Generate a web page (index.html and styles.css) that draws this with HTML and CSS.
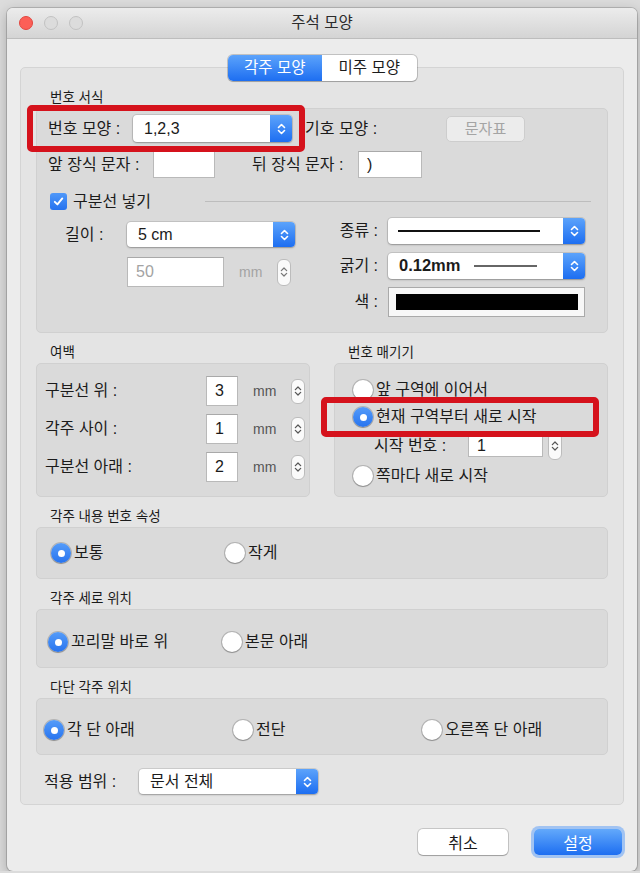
FILE: index.html
```html
<!DOCTYPE html>
<html lang="ko">
<head>
    <meta charset="UTF-8">
    <meta name="viewport" content="width=device-width, initial-scale=1.0">
    <title>주석 모양</title>
    <link rel="stylesheet" href="styles.css">
</head>
<body>
    <div class="window">
        <div class="titlebar">
            <div class="lights">
                <span class="light red"></span>
                <span class="light"></span>
                <span class="light"></span>
            </div>
            <div class="title">주석 모양</div>
            <div></div>
        </div>

        <div class="tabs">
            <span class="tab selected">각주 모양</span>
            <span class="tab">미주 모양</span>
        </div>

        <div class="outer">
            <p class="group-label">번호 서식</p>
            <div class="group format">
                <div class="mark mark-shape"></div>

                <div class="row row-shape">
                    <span class="label w-shape">번호 모양 :</span>
                    <div class="popup popup-shape">
                        <span class="popup-text">1,2,3</span>
                        <span class="popup-arrows"><svg width="9" height="14" viewBox="0 0 9 14"><path d="M1.5 5.5L4.5 2.5L7.5 5.5M1.5 8.5L4.5 11.5L7.5 8.5" fill="none" stroke="#fff" stroke-width="1.6" stroke-linecap="round" stroke-linejoin="round"/></svg></span>
                    </div>
                    <span class="label symbol-label">기호 모양 :</span>
                    <span class="plain-btn">문자표</span>
                </div>

                <div class="row row-deco">
                    <span class="label w-front">앞 장식 문자 :</span>
                    <span class="field field-front"></span>
                    <span class="label w-back">뒤 장식 문자 :</span>
                    <span class="field field-back">)</span>
                </div>

                <div class="row row-check">
                    <span class="checkbox"><svg width="11" height="11" viewBox="0 0 11 11"><path d="M1.8 5.8L4.4 8.4L9.3 2.4" fill="none" stroke="#fff" stroke-width="1.9" stroke-linecap="round" stroke-linejoin="round"/></svg></span>
                    <span class="check-text">구분선 넣기</span>
                    <span class="rule"></span>
                </div>

                <div class="lower">
                    <div class="lower-left">
                        <div class="row row-len">
                            <span class="label w-len">길이 :</span>
                            <div class="popup popup-len">
                                <span class="popup-text">5 cm</span>
                                <span class="popup-arrows"><svg width="9" height="14" viewBox="0 0 9 14"><path d="M1.5 5.5L4.5 2.5L7.5 5.5M1.5 8.5L4.5 11.5L7.5 8.5" fill="none" stroke="#fff" stroke-width="1.6" stroke-linecap="round" stroke-linejoin="round"/></svg></span>
                            </div>
                        </div>
                        <div class="row row-mm">
                            <span class="field field-len disabled">50</span>
                            <span class="unit disabled">mm</span>
                            <span class="stepper stepper-tall"><svg width="8" height="14" viewBox="0 0 9 14"><path d="M1.5 5.5L4.5 2.5L7.5 5.5M1.5 8.5L4.5 11.5L7.5 8.5" fill="none" stroke="#777" stroke-width="1.4" stroke-linecap="round" stroke-linejoin="round"/></svg></span>
                        </div>
                    </div>

                    <div class="lower-right">
                        <div class="row row-line">
                            <span class="label w-line">종류 :</span>
                            <div class="popup popup-line">
                                <span class="popup-text"><span class="sample-line"></span></span>
                                <span class="popup-arrows"><svg width="9" height="14" viewBox="0 0 9 14"><path d="M1.5 5.5L4.5 2.5L7.5 5.5M1.5 8.5L4.5 11.5L7.5 8.5" fill="none" stroke="#fff" stroke-width="1.6" stroke-linecap="round" stroke-linejoin="round"/></svg></span>
                            </div>
                        </div>
                        <div class="row row-line row-weight">
                            <span class="label w-line">굵기 :</span>
                            <div class="popup popup-line">
                                <span class="popup-text"><b class="weight">0.12mm</b><span class="thin-line"></span></span>
                                <span class="popup-arrows"><svg width="9" height="14" viewBox="0 0 9 14"><path d="M1.5 5.5L4.5 2.5L7.5 5.5M1.5 8.5L4.5 11.5L7.5 8.5" fill="none" stroke="#fff" stroke-width="1.6" stroke-linecap="round" stroke-linejoin="round"/></svg></span>
                            </div>
                        </div>
                        <div class="row row-color">
                            <span class="label w-line">색 :</span>
                            <span class="color-well"><span class="swatch"></span></span>
                        </div>
                    </div>
                </div>
            </div>

            <div class="two-col">
                <div class="col">
                    <p class="group-label">여백</p>
                    <div class="group margins">
                        <div class="row row-num">
                            <span class="label w-num">구분선 위 :</span>
                            <span class="field field-num">3</span>
                            <span class="unit">mm</span>
                            <span class="stepper"><svg width="8" height="14" viewBox="0 0 9 14"><path d="M1.5 5.5L4.5 2.5L7.5 5.5M1.5 8.5L4.5 11.5L7.5 8.5" fill="none" stroke="#555" stroke-width="1.4" stroke-linecap="round" stroke-linejoin="round"/></svg></span>
                        </div>
                        <div class="row row-num">
                            <span class="label w-num">각주 사이 :</span>
                            <span class="field field-num">1</span>
                            <span class="unit">mm</span>
                            <span class="stepper"><svg width="8" height="14" viewBox="0 0 9 14"><path d="M1.5 5.5L4.5 2.5L7.5 5.5M1.5 8.5L4.5 11.5L7.5 8.5" fill="none" stroke="#555" stroke-width="1.4" stroke-linecap="round" stroke-linejoin="round"/></svg></span>
                        </div>
                        <div class="row row-num">
                            <span class="label w-num">구분선 아래 :</span>
                            <span class="field field-num">2</span>
                            <span class="unit">mm</span>
                            <span class="stepper"><svg width="8" height="14" viewBox="0 0 9 14"><path d="M1.5 5.5L4.5 2.5L7.5 5.5M1.5 8.5L4.5 11.5L7.5 8.5" fill="none" stroke="#555" stroke-width="1.4" stroke-linecap="round" stroke-linejoin="round"/></svg></span>
                        </div>
                    </div>
                </div>

                <div class="col">
                    <p class="group-label">번호 매기기</p>
                    <div class="group numbering">
                        <div class="mark mark-restart"></div>
                        <div class="row radio-row"><span class="radio"></span>앞 구역에 이어서</div>
                        <div class="row radio-row row-restart"><span class="radio on"></span>현재 구역부터 새로 시작</div>
                        <div class="row row-start">
                            <span class="label w-start">시작 번호 :</span>
                            <span class="field field-start">1</span>
                            <span class="stepper stepper-start"><svg width="8" height="14" viewBox="0 0 9 14"><path d="M1.5 5.5L4.5 2.5L7.5 5.5M1.5 8.5L4.5 11.5L7.5 8.5" fill="none" stroke="#555" stroke-width="1.4" stroke-linecap="round" stroke-linejoin="round"/></svg></span>
                        </div>
                        <div class="row radio-row row-page"><span class="radio"></span>쪽마다 새로 시작</div>
                    </div>
                </div>
            </div>

            <p class="group-label">각주 내용 번호 속성</p>
            <div class="group options opt-size">
                <div class="row radio-row"><span class="radio on"></span>보통</div>
                <div class="row radio-row"><span class="radio"></span>작게</div>
            </div>

            <p class="group-label">각주 세로 위치</p>
            <div class="group options opt-vert">
                <div class="row radio-row"><span class="radio on"></span>꼬리말 바로 위</div>
                <div class="row radio-row"><span class="radio"></span>본문 아래</div>
            </div>

            <p class="group-label">다단 각주 위치</p>
            <div class="group options opt-multi">
                <div class="row radio-row"><span class="radio on"></span>각 단 아래</div>
                <div class="row radio-row"><span class="radio"></span>전단</div>
                <div class="row radio-row"><span class="radio"></span>오른쪽 단 아래</div>
            </div>

            <div class="row row-scope">
                <span class="label w-scope">적용 범위 :</span>
                <div class="popup popup-scope">
                    <span class="popup-text">문서 전체</span>
                    <span class="popup-arrows"><svg width="9" height="14" viewBox="0 0 9 14"><path d="M1.5 5.5L4.5 2.5L7.5 5.5M1.5 8.5L4.5 11.5L7.5 8.5" fill="none" stroke="#fff" stroke-width="1.6" stroke-linecap="round" stroke-linejoin="round"/></svg></span>
                </div>
            </div>
        </div>

        <div class="buttons">
            <button class="btn btn-cancel">취소</button>
            <button class="btn btn-ok">설정</button>
        </div>
    </div>
</body>
</html>
```

FILE: styles.css
```css
* {
    box-sizing: border-box;
}

body {
    margin: 0;
    background: #dcdcdc;
    font-family: "Liberation Sans", "Noto Sans CJK KR", sans-serif;
    font-size: 16px;
    line-height: 1.2;
    color: #1b1b1b;
}

.window {
    margin: 8px 0 0 7px;
    width: 630px;
    height: 863px;
    background: #ececec;
    border-radius: 6px;
    box-shadow: 0 0 0 1px rgba(0, 0, 0, 0.16), 0 4px 14px rgba(0, 0, 0, 0.25);
    overflow: hidden;
}

.titlebar {
    height: 31px;
    display: grid;
    grid-template-columns: 1fr auto 1fr;
    align-items: center;
    background: linear-gradient(#ececec, #d4d4d4);
    border-bottom: 1px solid #bdbdbd;
}

.lights {
    display: flex;
    gap: 11px;
    padding-left: 12px;
}

.light {
    width: 14px;
    height: 14px;
    border-radius: 50%;
    background: #dcdcdc;
    border: 1px solid #c2c2c2;
}

.light.red {
    background: #fc5f57;
    border-color: #e2463f;
}

.title {
    font-size: 15.5px;
    color: #2b2b2b;
}

/* segmented tabs */
.tabs {
    position: relative;
    z-index: 1;
    display: flex;
    width: 189px;
    height: 26px;
    margin: 16px auto -14px;
    background: #fff;
    border-radius: 5px;
    box-shadow: 0 0 0 1px rgba(0, 0, 0, 0.18), 0 1px 1px rgba(0, 0, 0, 0.15);
    overflow: hidden;
}

.tab {
    flex: 1;
    display: flex;
    align-items: center;
    justify-content: center;
    font-size: 15.5px;
}

.tab.selected {
    background: linear-gradient(#5ca3fb, #1d6ef1);
    color: #fff;
}

.outer {
    margin: 0 13px;
    height: 738px;
    padding: 10px 15px 0;
    background: #e4e4e4;
    border: 1px solid #d4d4d4;
    border-radius: 5px;
}

.group-label {
    margin: 12px 0 2px 14px;
    font-size: 13.5px;
    line-height: 16px;
}

.group {
    position: relative;
    background: #dadada;
    border: 1px solid #d0d0d0;
    border-radius: 5px;
}

.row {
    display: flex;
    align-items: center;
}

.label {
    flex-shrink: 0;
}

/* red annotation boxes */
.mark {
    position: absolute;
    z-index: 2;
    border: 6px solid #d5121c;
    border-radius: 5px;
}

.mark-shape {
    left: -10px;
    top: -4px;
    width: 278px;
    height: 47px;
}

.mark-restart {
    left: -14px;
    top: 33px;
    width: 278px;
    height: 40px;
}

/* popups */
.popup {
    display: flex;
    height: 100%;
    background: #fff;
    border-radius: 4px;
    box-shadow: 0 0 0 1px rgba(0, 0, 0, 0.1), 0 1px 2px rgba(0, 0, 0, 0.25);
}

.popup-text {
    flex: 1;
    display: flex;
    align-items: center;
    padding-left: 11px;
}

.popup-arrows {
    width: 22px;
    display: flex;
    align-items: center;
    justify-content: center;
    background: linear-gradient(#5ca3fb, #1d6ef1);
    border-radius: 0 4px 4px 0;
}

.field {
    display: flex;
    align-items: center;
    height: 100%;
    padding-left: 8px;
    background: #fff;
    border: 1px solid #b9b9b9;
    border-top-color: #a9a9a9;
}

.field.disabled,
.unit.disabled {
    color: #a3a3a3;
}

.unit {
    margin-left: 15px;
    font-size: 14px;
    color: #555;
}

.stepper {
    display: flex;
    align-items: center;
    justify-content: center;
    width: 14px;
    height: 25px;
    margin-left: 15px;
    background: #fafafa;
    border: 1px solid #bcbcbc;
    border-radius: 6px;
}

/* 번호 서식 */
.format {
    height: 225px;
    padding: 6px 0 0 11px;
}

.row-shape {
    height: 27px;
}

.w-shape {
    width: 85px;
}

.popup-shape {
    width: 159px;
}

.symbol-label {
    width: 141px;
    margin-left: 13px;
}

.plain-btn {
    display: flex;
    align-items: center;
    justify-content: center;
    width: 79px;
    height: 26px;
    background: #ececec;
    border: 1px solid #cdcdcd;
    border-radius: 5px;
    font-size: 15px;
    color: #a4a4a4;
}

.row-deco {
    height: 27px;
    margin-top: 9px;
}

.w-front {
    width: 105px;
}

.field-front {
    width: 62px;
}

.w-back {
    width: 106px;
    margin-left: 37px;
}

.field-back {
    width: 64px;
}

.row-check {
    height: 17px;
    margin-top: 15px;
    padding-left: 2px;
}

.checkbox {
    display: flex;
    align-items: center;
    justify-content: center;
    width: 17px;
    height: 17px;
    background: linear-gradient(#4f98f9, #2672ef);
    border-radius: 3px;
}

.check-text {
    margin-left: 6px;
}

.rule {
    flex: 1;
    height: 1px;
    margin: 0 16px 0 54px;
    background: #bdbdbd;
}

.lower {
    display: flex;
    margin-top: 8px;
}

.lower-left {
    padding: 4px 0 0 17px;
}

.row-len {
    height: 25px;
}

.w-len {
    width: 62px;
}

.popup-len {
    width: 168px;
}

.row-mm {
    height: 30px;
    margin: 10px 0 0 62px;
}

.field-len {
    width: 97px;
}

.stepper-tall {
    height: 27px;
}

.lower-right {
    margin: 0 22px 0 auto;
}

.row-line {
    height: 26px;
}

.row-weight {
    margin-top: 9px;
}

.w-line {
    width: 58px;
    padding-right: 10px;
    text-align: right;
}

.popup-line {
    width: 197px;
}

.sample-line {
    width: 142px;
    height: 2px;
    margin-left: -1px;
    background: #111;
}

.weight {
    font-size: 16.5px;
}

.thin-line {
    width: 63px;
    height: 1.5px;
    margin-left: 14px;
    background: #666;
}

.row-color {
    height: 30px;
    margin-top: 8px;
}

.color-well {
    width: 197px;
    height: 30px;
    padding: 6px 6px 6px 7px;
    background: #f7f7f7;
    border: 1px solid #a9a9a9;
}

.swatch {
    display: block;
    height: 100%;
    background: #000;
}

/* 여백 / 번호 매기기 */
.two-col {
    display: flex;
    gap: 24px;
}

.col {
    flex: 1;
}

.margins {
    height: 134px;
    padding: 4px 0 0 8px;
}

.row-num {
    height: 30px;
    margin-top: 8px;
}

.w-num {
    width: 161px;
}

.field-num {
    width: 32px;
}

.numbering {
    height: 134px;
    padding: 16px 0 0 18px;
}

.radio-row {
    height: 20px;
}

.radio {
    flex-shrink: 0;
    width: 20px;
    height: 20px;
    margin-right: 3px;
    background: #fff;
    border-radius: 50%;
    box-shadow: 0 0 0 1px rgba(0, 0, 0, 0.18), 0 1px 1px rgba(0, 0, 0, 0.2);
}

.radio.on {
    display: flex;
    align-items: center;
    justify-content: center;
    background: linear-gradient(#559cf9, #2874ef);
}

.radio.on::after {
    content: "";
    width: 7px;
    height: 7px;
    background: #fff;
    border-radius: 50%;
}

.row-restart {
    margin-top: 7px;
}

.row-start {
    height: 28px;
    margin-top: 5px;
}

.w-start {
    width: 94px;
    margin-left: 21px;
}

.field-start {
    width: 75px;
    height: 22px;
}

.stepper-start {
    height: 28px;
    margin-left: 5px;
}

.row-page {
    margin-top: 6px;
}

/* radio groups */
.options {
    display: grid;
    align-items: center;
}

.opt-size {
    height: 52px;
    padding-left: 14px;
    grid-template-columns: 174px 1fr;
}

.opt-vert {
    height: 59px;
    padding: 7px 0 0 11px;
    grid-template-columns: 174px 1fr;
}

.opt-multi {
    height: 57px;
    padding: 7px 0 0 7px;
    grid-template-columns: 189px 189px 1fr;
}

.row-scope {
    height: 25px;
    margin-top: 14px;
}

.w-scope {
    width: 103px;
    padding-left: 8px;
}

.popup-scope {
    width: 179px;
}

/* bottom buttons */
.buttons {
    display: flex;
    justify-content: flex-end;
    gap: 26px;
    margin: 24px 15px 0 0;
}

.btn {
    height: 26px;
    border: none;
    border-radius: 5px;
    font-family: inherit;
    font-size: 16px;
}

.btn-cancel {
    width: 90px;
    background: #fff;
    color: #1b1b1b;
    box-shadow: 0 0 0 1px rgba(0, 0, 0, 0.16), 0 1px 1px rgba(0, 0, 0, 0.2);
}

.btn-ok {
    width: 88px;
    background: linear-gradient(#63a9fb, #1d6ef1);
    color: #fff;
    box-shadow: 0 0 0 3px rgba(112, 168, 246, 0.6);
}
```
